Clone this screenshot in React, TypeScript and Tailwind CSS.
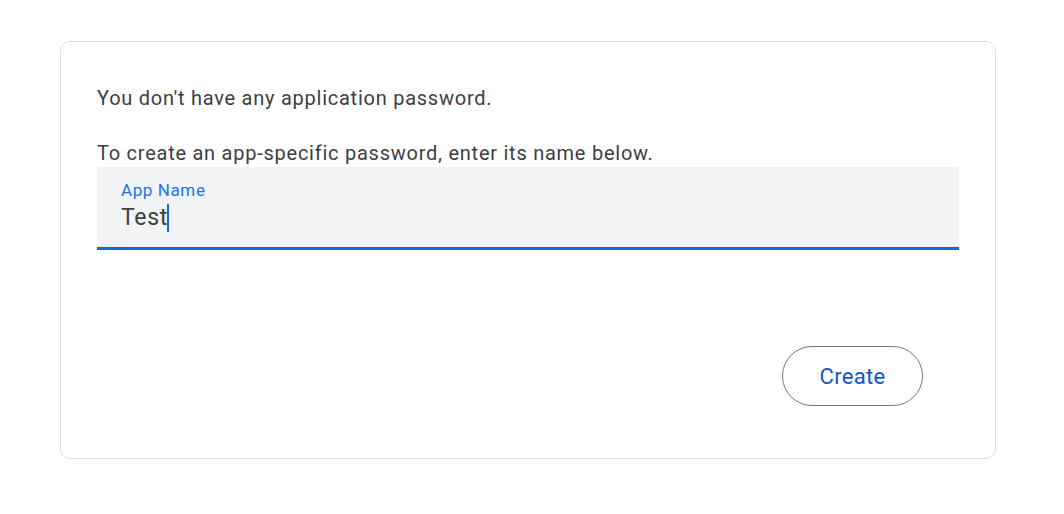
import React from "react"

export default function App() {
  return (
    <div className="min-h-screen bg-white pt-[41px] pl-[60px] font-['Roboto',sans-serif]">
      <div className="w-[936px] h-[418px] rounded-[10px] border border-[#dadce0] px-9 pt-[44px] flex flex-col">
        <p className="text-[20px] leading-[24px] text-[#3c4043] tracking-[0.75px]">
          You don't have any application password.
        </p>
        <p className="mt-[31px] text-[20px] leading-[24px] text-[#3c4043] tracking-[0.75px]">
          To create an app-specific password, enter its name below.
        </p>
        <div className="mt-[2px] h-[83px] rounded-t-[4px] bg-[#f1f3f4] border-b-[3px] border-[#1967d2] px-6 pt-[13px]">
          <div className="text-[17px] leading-[20px] tracking-[0.6px] text-[#1a73e8]">App Name</div>
          <div className="mt-1 flex items-center text-[23px] leading-[28px] tracking-[0.7px] text-[#3c4043]">
            <span>Test</span>
            <span className="-ml-[1px] w-[2px] h-[28px] bg-[#1967d2]" />
          </div>
        </div>
        <div className="flex justify-end mt-[96px] pr-[36px]">
          <button className="w-[141px] h-[60px] rounded-full border border-[#747775] text-[22px] tracking-[0.3px] text-[#0b57d0] font-normal">
            Create
          </button>
        </div>
      </div>
    </div>
  )
}
